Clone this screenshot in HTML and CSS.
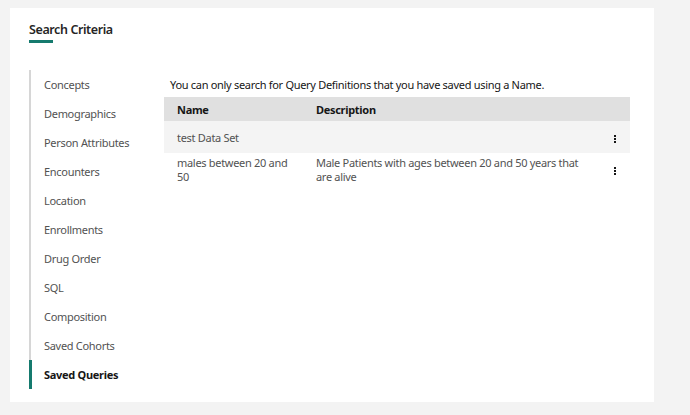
FILE: index.html
```html
<!DOCTYPE html>
<html lang="en">
<head>
<meta charset="utf-8">
<title>Search Criteria</title>
<link rel="stylesheet" href="styles.css">
</head>
<body>
<div class="page">
  <section class="card">
    <h2 class="title">Search Criteria</h2>
    <div class="title-bar"></div>
    <div class="layout">
      <ul class="nav">
        <li class="nav-item">Concepts</li>
        <li class="nav-item">Demographics</li>
        <li class="nav-item">Person Attributes</li>
        <li class="nav-item">Encounters</li>
        <li class="nav-item">Location</li>
        <li class="nav-item">Enrollments</li>
        <li class="nav-item">Drug Order</li>
        <li class="nav-item">SQL</li>
        <li class="nav-item">Composition</li>
        <li class="nav-item">Saved Cohorts</li>
        <li class="nav-item active">Saved Queries</li>
      </ul>
      <div class="content">
        <p class="hint">You can only search for Query Definitions that you have saved using a Name.</p>
        <table class="table">
          <thead>
            <tr>
              <th class="col-name">Name</th>
              <th class="col-desc">Description</th>
              <th class="col-menu"></th>
            </tr>
          </thead>
          <tbody>
            <tr class="hover">
              <td>test Data Set</td>
              <td></td>
              <td class="menu-cell"><span class="kebab"><i></i><i></i><i></i></span></td>
            </tr>
            <tr>
              <td>males between 20 and 50</td>
              <td>Male Patients with ages between 20 and 50 years that are alive</td>
              <td class="menu-cell"><span class="kebab"><i></i><i></i><i></i></span></td>
            </tr>
          </tbody>
        </table>
      </div>
    </div>
  </section>
</div>
</body>
</html>
```
FILE: styles.css
```css
* { box-sizing: border-box; }
html, body { margin: 0; padding: 0; }
body {
  background: #f3f3f3;
  font-family: "Noto Sans", "Liberation Sans", sans-serif;
  color: #161616;
  width: 690px;
  height: 415px;
  overflow: hidden;
}
.page {
  padding: 8px 36px 13px 10px;
}
.card {
  background: #ffffff;
  height: 394px;
  padding: 14px 24px 0 19px;
}
.title {
  margin: 0;
  font-size: 12.5px;
  line-height: 16px;
  font-weight: 600;
  letter-spacing: -0.4px;
  color: #262626;
}
.title-bar {
  width: 24px;
  height: 3px;
  background: #157a6e;
  margin-top: 2px;
}
.layout {
  display: flex;
  margin-top: 27px;
}
.nav {
  list-style: none;
  margin: 0;
  padding: 0;
  width: 135px;
  flex: none;
  border-left: 2px solid #d6d6d6;
}
.nav-item {
  height: 29px;
  line-height: 28px;
  padding: 1px 0 0 13px;
  font-size: 11px;
  letter-spacing: -0.3px;
  color: #525252;
  position: relative;
}
.nav-item.active {
  color: #161616;
  font-weight: 700;
}
.nav-item.active::before {
  content: "";
  position: absolute;
  left: -2px;
  top: 0;
  bottom: 0;
  width: 3px;
  background: #157a6e;
}
.content {
  flex: 1;
}
.hint {
  margin: 8px 0 5px 6px;
  font-size: 11px;
  line-height: 14px;
  letter-spacing: -0.3px;
  color: #161616;
}
.table {
  width: 466px;
  border-collapse: collapse;
  table-layout: fixed;
  font-size: 11px;
  line-height: 14px;
  letter-spacing: -0.3px;
}
.col-name { width: 139px; }
.col-desc { width: 297px; }
.col-menu { width: 30px; }
.table th {
  background: #e0e0e0;
  height: 24px;
  text-align: left;
  font-weight: 700;
  padding: 1px 13px 0;
  color: #161616;
}
.table td {
  height: 32px;
  padding: 3px 13px 1px;
  vertical-align: middle;
  color: #525252;
}
.table tr.hover td { background: #f4f4f4; }
.menu-cell { padding: 1px 0 0 !important; text-align: center; }
.kebab {
  display: inline-flex;
  flex-direction: column;
  gap: 1px;
  vertical-align: middle;
}
.kebab i {
  display: block;
  width: 2px;
  height: 2px;
  background: #161616;
}
```
